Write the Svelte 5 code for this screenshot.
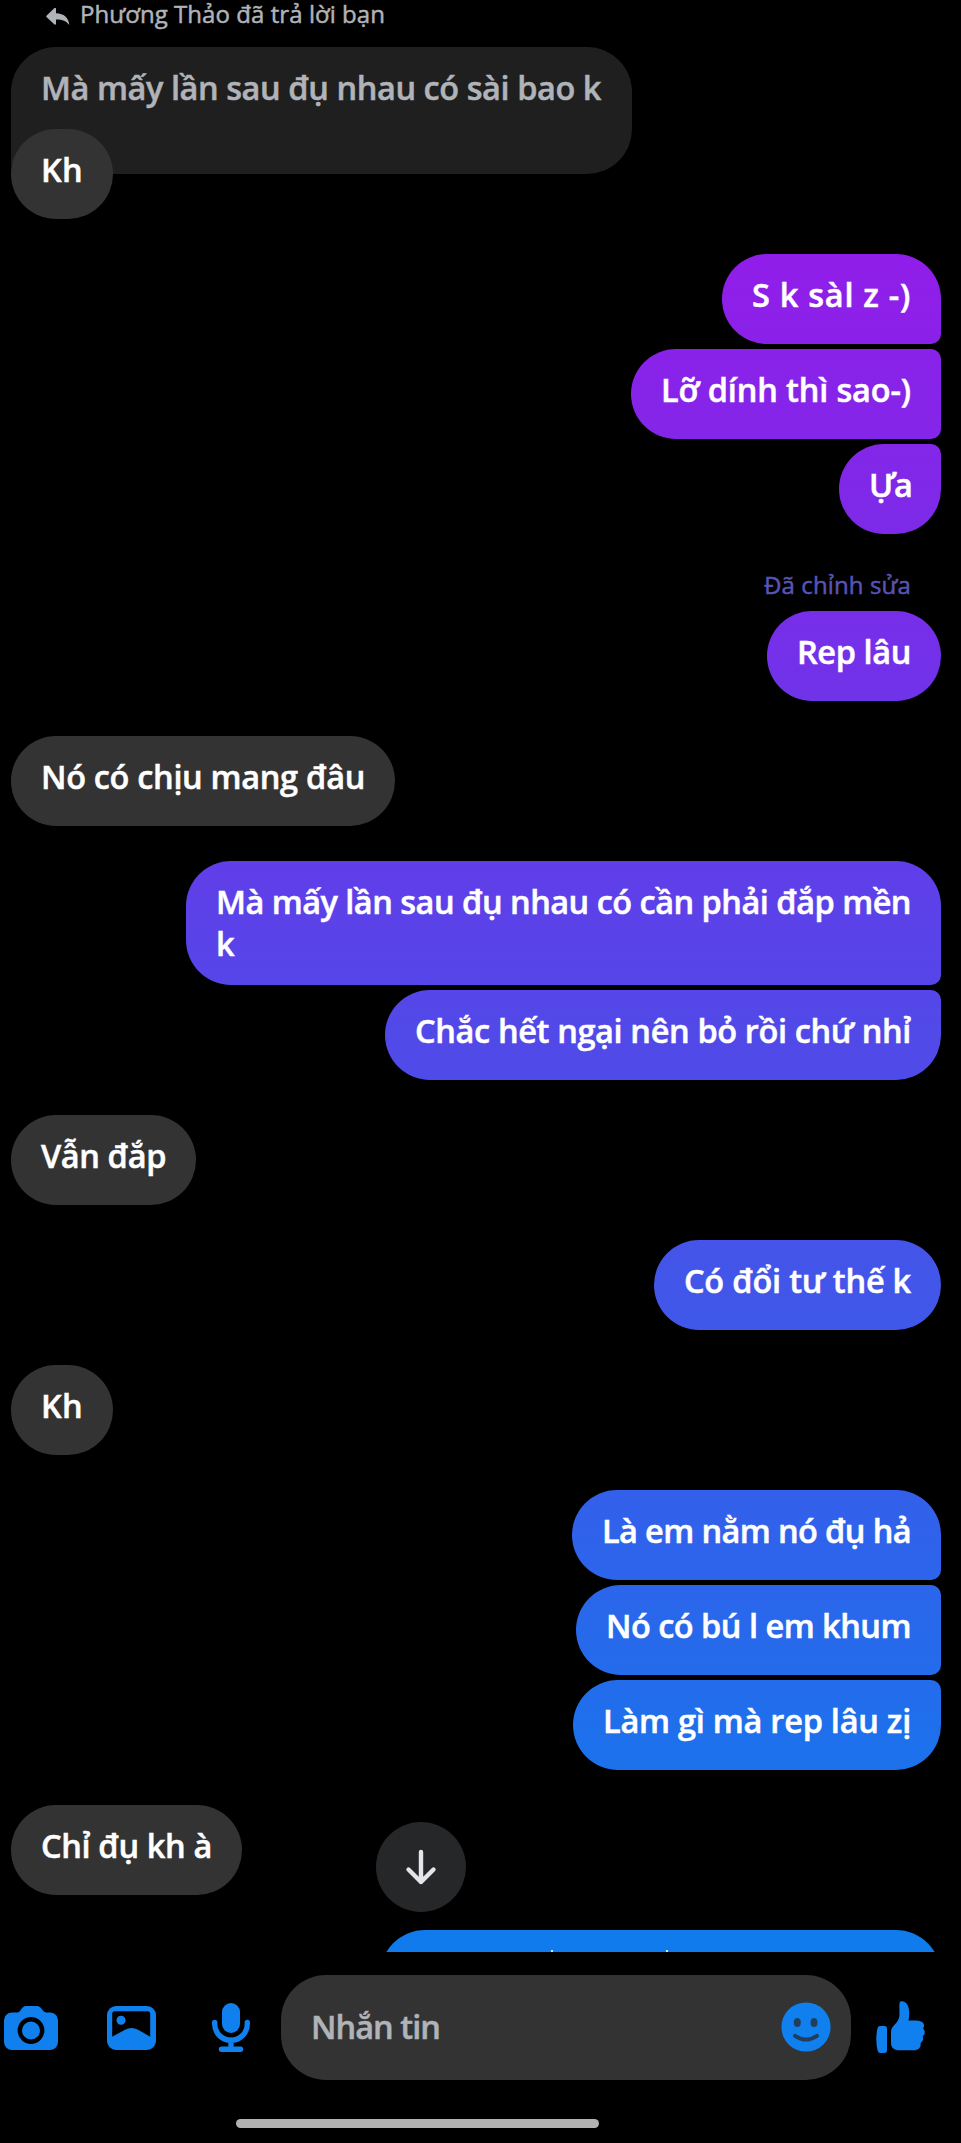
<script>
  // w is the bubble width; the label inside is tracked out to fill it
  const groups = [
    {
      mine: true,
      items: [
        { w: 219, lines: ['S k sàl z -)'] },
        { w: 310, lines: ['Lỡ dính thì sao-)'] },
        { w: 102, lines: ['Ựa'] },
      ],
    },
    { mine: true, edited: true, items: [{ w: 174, lines: ['Rep lâu'] }] },
    { mine: false, items: [{ w: 384, lines: ['Nó có chịu mang đâu'] }] },
    {
      mine: true,
      items: [
        { w: 755, lines: ['Mà mấy lần sau đụ nhau có cần phải đắp mền', 'k'] },
        { w: 556, lines: ['Chắc hết ngại nên bỏ rồi chứ nhỉ'] },
      ],
    },
    { mine: false, items: [{ w: 185, lines: ['Vẫn đắp'] }] },
    { mine: true, items: [{ w: 287, lines: ['Có đổi tư thế k'] }] },
    { mine: false, items: [{ w: 102, lines: ['Kh'] }] },
    {
      mine: true,
      items: [
        { w: 369, lines: ['Là em nằm nó đụ hả'] },
        { w: 365, lines: ['Nó có bú l em khum'] },
        { w: 368, lines: ['Làm gì mà rep lâu zị'] },
      ],
    },
    { mine: false, items: [{ w: 231, lines: ['Chỉ đụ kh à'] }] },
  ]

  function fit(node, width) {
    if (!width) return
    const natural = node.getBoundingClientRect().width
    node.style.letterSpacing = `${(width - natural) / node.textContent.length}px`
  }
</script>

<div class="screen">
  <main class="chat">
    <div class="reply-note">
      <svg width="24" height="18" viewBox="0 0 24 18">
        <path d="M10 .8v4.400c7.800.2 13 4.400 13.200 11.900-2.800-4.200-7-5.700-13.200-5.600v4.200c0 1-1 1.300-1.800.6L.7 9.300c-.6-.6-.6-1.200 0-1.800L8.200.3C9-.4 10-.1 10 .8z" fill="#b0b3b8" />
      </svg>
      <span use:fit={305}>Phương Thảo đã trả lời bạn</span>
    </div>

    <div class="group theirs">
      <div class="bubble quote" style="width:621px">
        <span class="line" use:fit={560}>Mà mấy lần sau đụ nhau có sài bao k</span>
      </div>
      <div class="bubble over" style="width:102px">
        <span class="line" use:fit={42}>Kh</span>
      </div>
    </div>

    {#each groups as g}
      <div class="group" class:mine={g.mine} class:theirs={!g.mine}>
        {#if g.edited}
          <div class="edited"><span use:fit={147}>Đã chỉnh sửa</span></div>
        {/if}
        {#each g.items as m}
          <div class="bubble" class:tall={m.lines.length > 1} style="width:{m.w}px">
            {#each m.lines as text, i}
              <span class="line" use:fit={i === 0 ? m.w - 60 : 0}>{text}</span>
            {/each}
          </div>
        {/each}
      </div>
    {/each}

    <div class="group mine">
      <div class="bubble peek"><i></i><i></i></div>
    </div>

    <button class="jump" aria-label="↓">
      <svg width="34" height="38" viewBox="0 0 34 38">
        <path d="M17 4v30M4.500 21.500 17 34l12.500-12.500" fill="none" stroke="#e4e6eb" stroke-width="4.400" stroke-linecap="round" stroke-linejoin="round" />
      </svg>
    </button>
  </main>

  <footer>
    <div class="composer">
      <svg class="camera" width="54" height="44" viewBox="0 0 54 44">
        <path d="M8 6.500h5c4 0 4.500-6.500 9-6.500h11c4.500 0 5.500 6.500 9.500 6.500H46a8 8 0 0 1 8 8V36a8 8 0 0 1-8 8H8a8 8 0 0 1-8-8V14.500a8 8 0 0 1 8-8z" fill="#1080ee" />
        <circle cx="27" cy="24.500" r="11.200" fill="#1080ee" stroke="#000" stroke-width="4.400" />
      </svg>
      <svg class="photo" width="49" height="44" viewBox="0 0 49 44">
        <path fill-rule="evenodd" d="M9 0h31a9 9 0 0 1 9 9v26a9 9 0 0 1-9 9H9a9 9 0 0 1-9-9V9a9 9 0 0 1 9-9zM8 5.200Q5.200 5.200 5.200 8v22.800L18 23.700q6.500-3.600 13 0l12.200 7V8q0-2.800-2.800-2.800z" fill="#1080ee" />
        <circle cx="14" cy="14.300" r="4.500" fill="#1080ee" />
      </svg>
      <svg class="mic" width="38" height="49" viewBox="0 0 38 49">
        <rect x="10" y="0" width="18" height="30" rx="9" fill="#1080ee" />
        <path d="M2.700 19.500V21a16.300 16.300 0 0 0 32.600 0v-1.500M19 37v9M9.500 46.200h19" fill="none" stroke="#1080ee" stroke-width="5.400" stroke-linecap="round" />
      </svg>
      <div class="field">
        <span class="line" use:fit={129}>Nhắn tin</span>
        <svg width="50" height="50" viewBox="0 0 50 50">
          <circle cx="25" cy="25" r="24.600" fill="#1080ee" />
          <ellipse cx="16.300" cy="20.500" rx="3.500" ry="4.600" fill="#203f5c" />
          <ellipse cx="33" cy="20.500" rx="3.500" ry="4.600" fill="#203f5c" />
          <path d="M14 33.800q11 7.500 22 0" fill="none" stroke="#203f5c" stroke-width="4" stroke-linecap="round" />
        </svg>
      </div>
      <svg class="like" width="50" height="53" viewBox="0 0 50 53">
        <path d="M4 25h4.500Q11 25 11 27.500v21.500q0 3-2.500 3H4.500Q2.300 52 1.600 49.500-1 38 1.600 27 2 25 4 25z" fill="#1080ee" />
        <path d="M23.500 2.500C23.800.3 25 0 26.500.3 32.500 1.500 34.500 9 32.500 19.500H40c4 0 7 1.200 7.800 3.700.6 2-.1 3.300-.8 4.300 2.400 2 2.300 5.800-.2 7.700 1 3-.2 5.600-2.200 6.700.8 4.500-2.300 7.400-6.600 7.400H23c-4.500 0-8-2.500-8-7V31c0-7 8.500-8.500 8.500-17.500 0-4-.3-8 0-11z" fill="#1080ee" />
      </svg>
    </div>
    <div class="home-bar"></div>
  </footer>
</div>

<style>
  :global(body) {
    background: #000;
  }

  .screen {
    width: 961px;
    height: 2143px;
    background: #000;
    overflow: hidden;
    color: #fff;
    font-family: 'Open Sans', 'Noto Sans', sans-serif;
    font-size: 32.5px;
    font-weight: 600;
    -webkit-text-stroke: 0.5px currentColor;
  }

  .chat {
    position: relative;
    height: 1952px;
    padding: 0 20px 0 11px;
    box-sizing: border-box;
    overflow: hidden;
  }

  .reply-note {
    display: flex;
    height: 47px;
    padding-left: 35px;
    gap: 10px;
    color: #b0b3b8;
    font-size: 24px;
    font-weight: 500;
    line-height: 28px;
    white-space: nowrap;
  }

  .reply-note svg {
    margin-top: 8px;
  }

  .reply-note span {
    align-self: flex-start;
  }

  .group {
    display: flex;
    flex-direction: column;
    gap: 5px;
    margin-bottom: 35px;
  }

  .mine {
    align-items: flex-end;
  }

  .theirs {
    align-items: flex-start;
  }

  .bubble {
    box-sizing: border-box;
    height: 90px;
    padding: 20px 0 0 30px;
    border-radius: 45px;
    background: #333;
    line-height: 42px;
    flex-shrink: 0;
  }

  .bubble.tall {
    height: 124px;
  }

  .line {
    display: block;
    width: max-content;
    white-space: nowrap;
  }

  .mine .bubble {
    background: linear-gradient(
      180deg,
      #911de9 250px,
      #7430e8 650px,
      #603ee9 861px,
      #5149e8 1035px,
      #4256e9 1285px,
      #3062eb 1535px,
      #1f6feb 1725px,
      #107bec 1940px
    );
    background-attachment: fixed;
  }

  .mine .bubble:has(+ .bubble) {
    border-bottom-right-radius: 10px;
  }

  .mine .bubble + .bubble {
    border-top-right-radius: 10px;
  }

  .theirs .quote {
    height: 127px;
    border-bottom-left-radius: 0;
    background: #1f1f1f;
    color: #b0b3b8;
  }

  .over {
    margin-top: -50px;
  }

  .edited {
    height: 37px;
    padding-right: 30px;
    color: #5854b4;
    font-size: 24px;
    font-weight: 500;
    line-height: 32px;
  }

  .edited span {
    display: block;
    width: max-content;
  }

  .theirs .quote {
    border-bottom-left-radius: 10px;
  }

  .mine .peek {
    display: flex;
    gap: 113px;
    width: 561px;
    padding: 20px 0 0 171px;
  }

  .peek i {
    width: 2px;
    height: 2px;
    background: #d5e8fc;
  }

  .jump {
    position: absolute;
    left: 376px;
    top: 1822px;
    display: grid;
    place-items: center;
    width: 90px;
    height: 90px;
    padding: 0;
    border: 0;
    border-radius: 50%;
    background: #262729;
  }

  .composer {
    display: flex;
    align-items: center;
    height: 105px;
    padding: 23px 0 0 4px;
  }

  svg {
    display: block;
    flex-shrink: 0;
  }

  .photo {
    margin-left: 49px;
  }

  .mic {
    margin-left: 56px;
  }

  .field {
    display: flex;
    align-items: center;
    justify-content: space-between;
    box-sizing: border-box;
    width: 570px;
    height: 105px;
    margin: 0 25px 0 31px;
    padding: 0 20px 2px 30px;
    border-radius: 45px;
    background: #333;
    color: #b0b3b8;
  }

  .home-bar {
    width: 363px;
    height: 9px;
    margin: 39px 0 0 236px;
    border-radius: 5px;
    background: #b2b2b2;
  }
</style>
